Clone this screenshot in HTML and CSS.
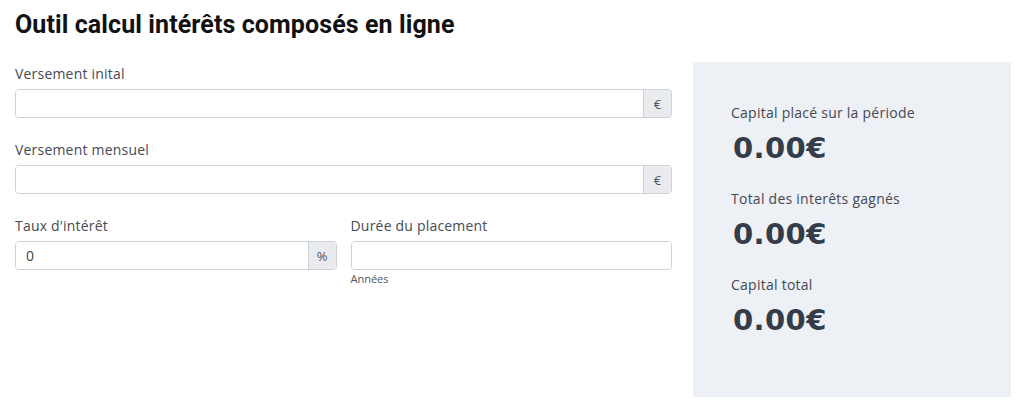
FILE: index.html
```html
<!DOCTYPE html>
<html lang="fr">
<head>
    <meta charset="UTF-8">
    <meta name="viewport" content="width=device-width, initial-scale=1.0">
    <title>Outil calcul intérêts composés en ligne</title>
    <link rel="stylesheet" href="styles.css">
</head>
<body>
    <h1>Outil calcul intérêts composés en ligne</h1>
    <main class="calc">
        <form class="calc-form">
            <div class="field">
                <label for="initial">Versement inital</label>
                <div class="input-group">
                    <input type="text" id="initial">
                    <span class="addon">€</span>
                </div>
            </div>
            <div class="field">
                <label for="monthly">Versement mensuel</label>
                <div class="input-group">
                    <input type="text" id="monthly">
                    <span class="addon">€</span>
                </div>
            </div>
            <div class="field-row">
                <div class="field">
                    <label for="rate">Taux d'intérêt</label>
                    <div class="input-group">
                        <input type="text" id="rate" value="0">
                        <span class="addon">%</span>
                    </div>
                </div>
                <div class="field">
                    <label for="years">Durée du placement</label>
                    <div class="input-group">
                        <input type="text" id="years">
                    </div>
                    <small class="help">Années</small>
                </div>
            </div>
        </form>
        <aside class="results">
            <div class="result">
                <p class="result-label">Capital placé sur la période</p>
                <p class="result-value">0.00€</p>
            </div>
            <div class="result">
                <p class="result-label">Total des interêts gagnés</p>
                <p class="result-value">0.00€</p>
            </div>
            <div class="result">
                <p class="result-label">Capital total</p>
                <p class="result-value">0.00€</p>
            </div>
        </aside>
    </main>
</body>
</html>
```

FILE: styles.css
```css
body {
    margin: 0;
    padding: 0 13px 0 15px;
    font-family: "Open Sans", Arial, sans-serif;
    color: #4a4f57;
    background-color: #fff;
}

h1 {
    margin: 0;
    padding-top: 9px;
    font-family: Roboto, Arial, sans-serif;
    font-size: 25px;
    line-height: 32px;
    font-weight: 700;
    letter-spacing: 0.1px;
    color: #111;
}

.calc {
    display: grid;
    grid-template-columns: 657px 318px;
    column-gap: 21px;
    margin-top: 21px;
    align-items: start;
}

.calc-form {
    padding-top: 2px;
}

.field {
    margin-bottom: 22px;
}

.field label {
    display: block;
    font-size: 14px;
    line-height: 20px;
    letter-spacing: 0.2px;
    margin-bottom: 5px;
    color: #454a52;
}

.field-row {
    display: grid;
    grid-template-columns: 1fr 1fr;
    column-gap: 14px;
}

.input-group {
    display: flex;
    height: 29px;
    border: 1px solid #cdd2d8;
    border-radius: 4px;
    box-sizing: border-box;
    overflow: hidden;
}

.input-group input {
    flex: 1;
    min-width: 0;
    border: none;
    padding: 0 10px;
    font-family: "Open Sans", Arial, sans-serif;
    font-size: 14px;
    color: #444;
    background: #fff;
    outline: none;
}

.addon {
    width: 27px;
    border-left: 1px solid #cdd2d8;
    background-color: #e9ebee;
    font-size: 13px;
    color: #555;
    display: flex;
    align-items: center;
    justify-content: center;
}

.help {
    display: block;
    font-size: 11px;
    line-height: 14px;
    margin-top: 2px;
    color: #555;
}

.results {
    background-color: #edf0f5;
    padding: 41px 20px 60px 38px;
}

.result {
    margin-bottom: 24px;
}

.result:last-child {
    margin-bottom: 0;
}

.result-label {
    margin: 0 0 8px;
    font-size: 14px;
    line-height: 20px;
    letter-spacing: 0.25px;
    color: #454a52;
}

.result-value {
    margin: 0;
    font-family: "DejaVu Sans", Arial, sans-serif;
    font-weight: 700;
    font-size: 29px;
    line-height: 34px;
    letter-spacing: 0.4px;
    color: #333d4a;
    padding-left: 2px;
}
```
